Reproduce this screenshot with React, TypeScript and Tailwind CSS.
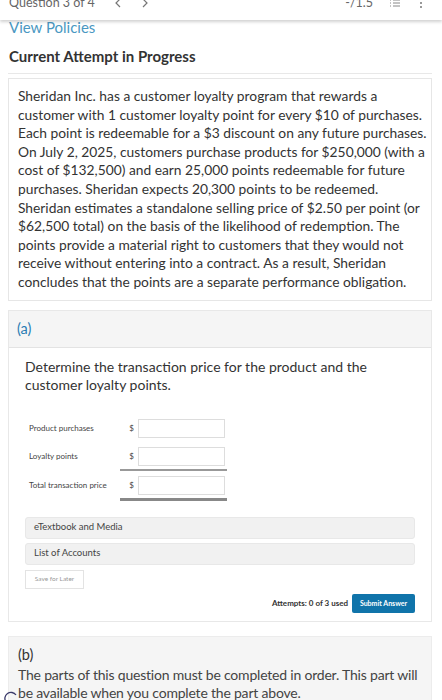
import React from "react";

const intro = [
  "Sheridan Inc. has a customer loyalty program that rewards a",
  "customer with 1 customer loyalty point for every $10 of purchases.",
  "Each point is redeemable for a $3 discount on any future purchases.",
  "On July 2, 2025, customers purchase products for $250,000 (with a",
  "cost of $132,500) and earn 25,000 points redeemable for future",
  "purchases. Sheridan expects 20,300 points to be redeemed.",
  "Sheridan estimates a standalone selling price of $2.50 per point (or",
  "$62,500 total) on the basis of the likelihood of redemption. The",
  "points provide a material right to customers that they would not",
  "receive without entering into a contract. As a result, Sheridan",
  "concludes that the points are a separate performance obligation.",
];

export default function App() {
  return (
    <div className="relative w-[442px] h-[700px] overflow-hidden bg-white text-[#333]" style={{ fontFamily: "Lato, 'Open Sans', sans-serif" }}>
      {/* top bar */}
      <div className="relative z-10 h-[20px] bg-white shadow-[0_2px_3px_rgba(0,0,0,0.18)] overflow-hidden flex items-start text-[#666] text-[12.5px]">
        <div className="flex items-center -mt-[6px] w-full">
          <span className="ml-[9px]">Question 3 of 4</span>
          <svg className="ml-[19px]" width="8" height="12" viewBox="0 0 8 12" fill="none" stroke="#777" strokeWidth="1.2">
            <path d="M6 2L2 6l4 4" />
          </svg>
          <svg className="ml-[19px]" width="8" height="12" viewBox="0 0 8 12" fill="none" stroke="#777" strokeWidth="1.2">
            <path d="M2 2l4 4-4 4" />
          </svg>
          <span className="ml-auto">-/1.5</span>
          <svg className="ml-[16px]" width="12" height="12" viewBox="0 0 12 12" fill="none" stroke="#888" strokeWidth="1">
            <path d="M1 3h1M4 3h7M1 6h1M4 6h7M1 9h1M4 9h7" />
          </svg>
          <svg className="ml-[18px] mr-[19px]" width="4" height="12" viewBox="0 0 4 12" fill="#777">
            <circle cx="2" cy="2" r="1" />
            <circle cx="2" cy="6" r="1" />
            <circle cx="2" cy="10" r="1" />
          </svg>
        </div>
      </div>

      <div className="px-[8px] pr-[10px]">
        <div className="text-[15px] leading-[18px] text-[#4a98c2] mt-[-2px] pl-[1px]">View Policies</div>
        <div className="text-[15px] leading-[18px] font-bold text-[#333] mt-[11px] pl-[1px]">Current Attempt in Progress</div>
        <div className="h-px bg-[#e8e8e8] mt-[8px]" />

        <div className="mt-[4px] border border-[#e6e6e6] pl-[9px] pr-[2px] pt-[8px] pb-[8px] text-[13.8px] leading-[18.6px] text-[#333]">
          {intro.map((l) => (
            <div key={l} className="whitespace-nowrap">{l}</div>
          ))}
        </div>

        {/* part a */}
        <div className="mt-[9px] border border-[#e8e8e8]">
          <div className="bg-[#f5f5f5] h-[37px] flex items-center px-[8px] text-[14.5px] text-[#2a7db3] border-b border-[#e3e3e3]">(a)</div>
          <div className="px-[16px] pt-[10px] pb-[8px]">
            <div className="text-[14px] leading-[18.5px] text-[#333]">
              Determine the transaction price for the product and the customer loyalty points.
            </div>

            <div className="mt-[24px] pl-[4px] text-[8px] text-[#444]">
              <div className="flex items-center h-[19px]">
                <span className="w-[96px]">Product purchases</span>
                <span className="w-[13px] text-center">$</span>
                <div className="w-[87px] h-[19px] border border-[#ddd] bg-white" />
              </div>
              <div className="flex items-center h-[19px] mt-[9px]">
                <span className="w-[96px]">Loyalty points</span>
                <span className="w-[13px] text-center">$</span>
                <div className="w-[87px] h-[19px] border border-[#ddd] bg-white" />
              </div>
              <div className="ml-[91px] w-[107px] h-[2px] bg-[#999] mt-[3px]" />
              <div className="flex items-center h-[19px] mt-[5px]">
                <span className="w-[96px]">Total transaction price</span>
                <span className="w-[13px] text-center">$</span>
                <div className="w-[87px] h-[19px] border border-[#ddd] bg-white" />
              </div>
              <div className="ml-[91px] w-[107px] h-[3px] bg-[#888] mt-[3px]" />
            </div>

            <div className="mt-[16px] h-[22px] rounded-[3px] bg-[#f1f1f1] border border-[#e8e8e8] flex items-center px-[8px] text-[9.5px] text-[#444]">eTextbook and Media</div>
            <div className="mt-[4px] h-[22px] rounded-[3px] bg-[#f1f1f1] border border-[#e8e8e8] flex items-center px-[8px] text-[9.5px] text-[#444]">List of Accounts</div>
            <div className="mt-[5px] w-[59px] h-[19px] border border-[#e3e3e3] bg-white flex items-center justify-center text-[6.5px] text-[#999]">Save for Later</div>
            <div className="mt-[5px] flex items-center justify-end gap-[4px]">
              <span className="text-[8px] font-bold text-[#333]">Attempts: 0 of 3 used</span>
              <div className="w-[63px] h-[19px] rounded-[2px] bg-[#1074aa] flex items-center justify-center text-[7px] font-bold text-white">Submit Answer</div>
            </div>
          </div>
        </div>

        {/* part b */}
        <div className="mt-[14px] border border-[#ececec] bg-[#f5f5f5] pl-[9px] pr-[2px] pt-[9px] pb-[10px]">
          <div className="text-[14.5px] leading-[18px] text-[#333]">(b)</div>
          <div className="mt-[2px] text-[14px] leading-[18.5px] tracking-[-0.2px] text-[#444]">
            <div className="whitespace-nowrap">The parts of this question must be completed in order. This part will</div>
            <div className="whitespace-nowrap">be available when you complete the part above.</div>
          </div>
        </div>
      </div>

      <svg className="absolute left-[4px] top-[690px]" width="14" height="14" viewBox="0 0 14 14" fill="none">
        <path d="M2 12 A6 6 0 0 1 12 5" stroke="#3a3a6a" strokeWidth="1.3" />
      </svg>
    </div>
  );
}
